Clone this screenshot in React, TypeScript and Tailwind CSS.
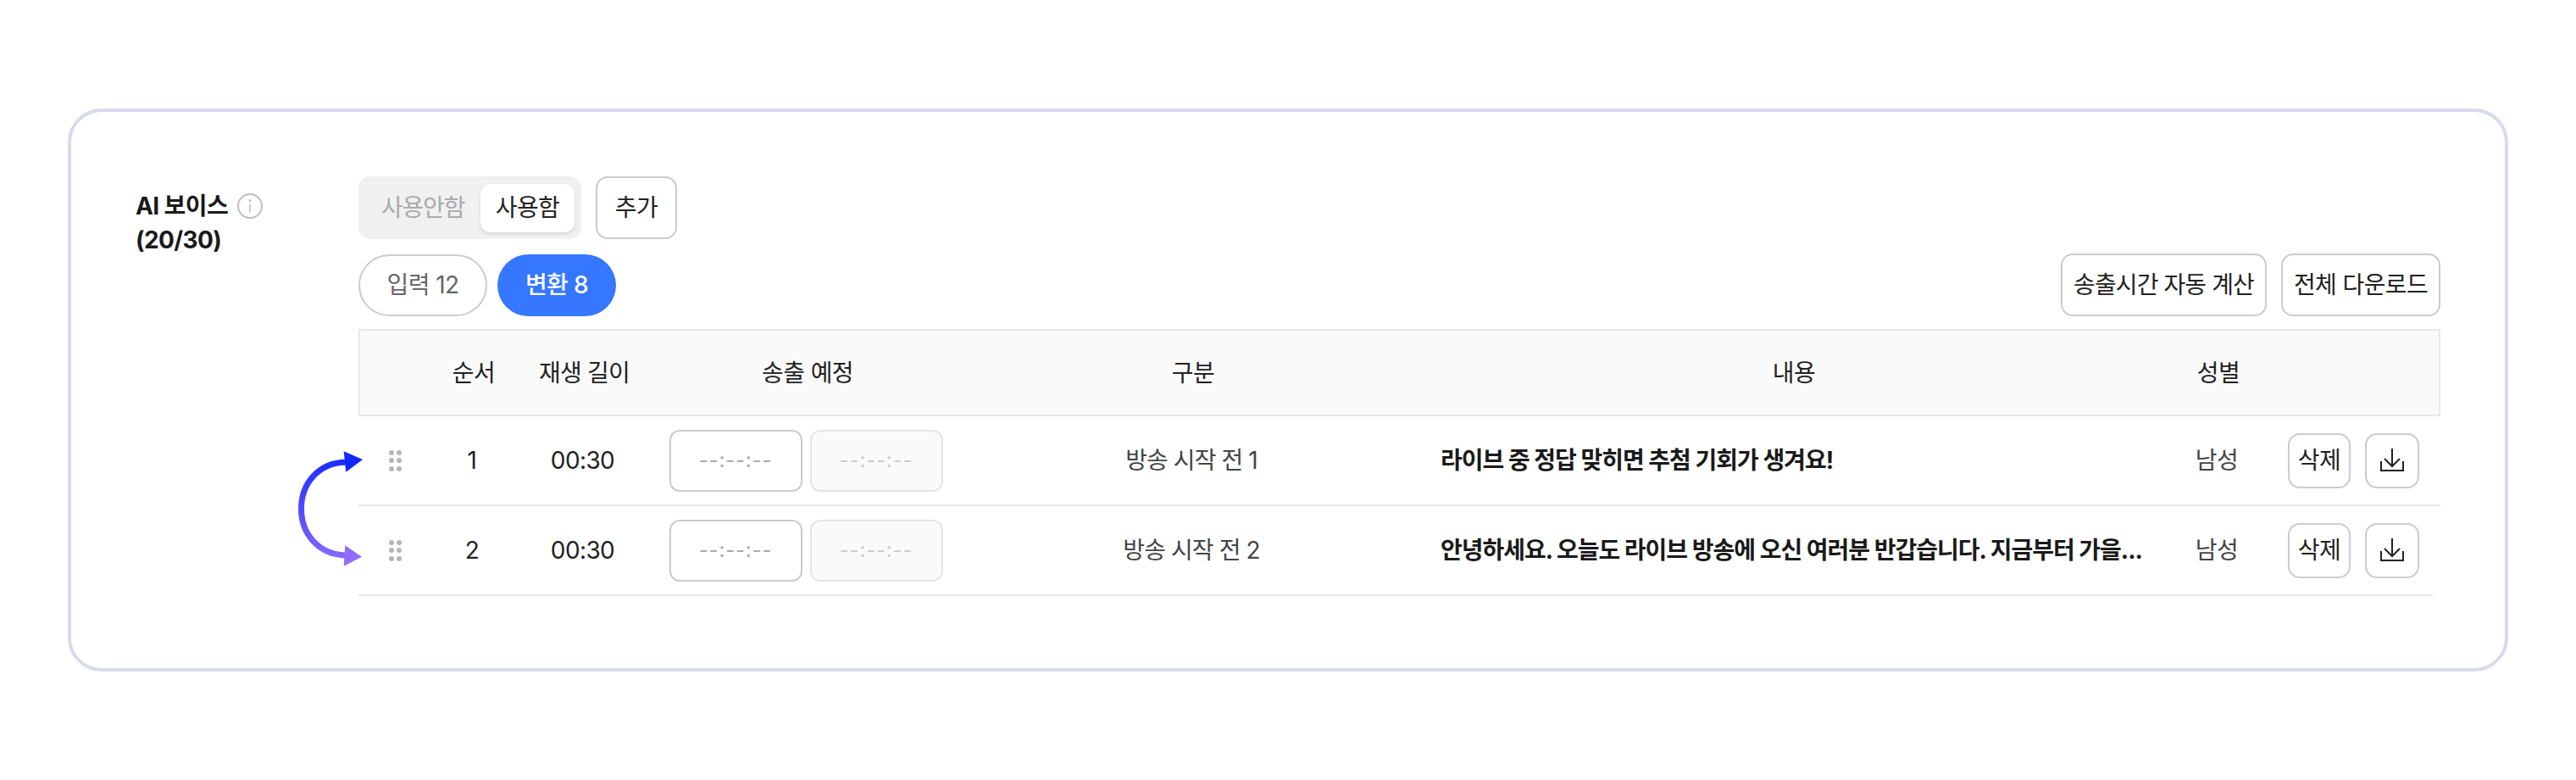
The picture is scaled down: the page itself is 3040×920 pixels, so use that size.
import { useState } from "react";

const rowGrid =
  "grid grid-cols-[87px_94px_167px_360px_550px_868px_134px_1fr] items-center";

const rows = [
  {
    order: 1,
    section: "방송 시작 전 1",
    content: "라이브 중 정답 맞히면 추첨 기회가 생겨요!",
    width: "w-full",
  },
  {
    order: 2,
    section: "방송 시작 전 2",
    content: "안녕하세요. 오늘도 라이브 방송에 오신 여러분 반갑습니다. 지금부터 가을...",
    width: "w-[2448px]",
  },
];

const InfoIcon = () => (
  <svg width="30" height="30" viewBox="0 0 30 30" fill="none" className="shrink-0">
    <circle cx="15" cy="15" r="14" stroke="#bdbdbd" strokeWidth="2" />
    <circle cx="15" cy="8.5" r="1.4" fill="#bdbdbd" />
    <path d="M15 12.5V22.5" stroke="#bdbdbd" strokeWidth="1.6" />
  </svg>
);

const DownloadIcon = () => (
  <svg width="28" height="28" viewBox="0 0 28 28" fill="none">
    <path d="M14 0V20.5" stroke="#222" strokeWidth="2" />
    <path d="M5 12L14 21L23 12" stroke="#222" strokeWidth="2" />
    <path d="M1 15V26H27V15" stroke="#222" strokeWidth="2" />
  </svg>
);

const DragHandle = () => (
  <div className="grid w-[16px] grid-cols-2 gap-x-[3px] gap-y-[3.5px] justify-self-center">
    {[0, 1, 2, 3, 4, 5].map((i) => (
      <span key={i} className="size-[6px] rounded-full bg-[#b5b5b5]" />
    ))}
  </div>
);

const SwapArrow = () => (
  <svg
    width="84"
    height="150"
    viewBox="0 0 84 150"
    fill="none"
    className="absolute left-[-78px] top-[137px]"
  >
    <defs>
      <linearGradient id="swap" x1="0" y1="7" x2="0" y2="143" gradientUnits="userSpaceOnUse">
        <stop offset="0" stopColor="#1228ff" />
        <stop offset="1" stopColor="#906dff" />
      </linearGradient>
    </defs>
    <path
      d="M63 20C31 21 10.500 45 10.500 75C10.500 105 31 129 63 130"
      stroke="url(#swap)"
      strokeWidth="7"
    />
    <path d="M60.700 7.300L83 17L63.300 31.700Z" fill="#1228ff" />
    <path d="M62.300 118.300L82 131.700L60.700 142.700Z" fill="#906dff" />
  </svg>
);

const TimeBox = ({ disabled }: { disabled?: boolean }) => (
  <div
    className={
      "flex h-[73px] w-[157px] items-center justify-center rounded-[12px] border-2 text-[24px] tracking-[0.8px] " +
      (disabled
        ? "border-[#e5e5e5] bg-[#fafafa] text-[#cccccc]"
        : "border-[#cccccc] bg-white text-[#aaaaaa]")
    }
  >
    --:--:--
  </div>
);

const OutlineButton = ({ children, className }: { children: React.ReactNode; className: string }) => (
  <button
    className={
      "flex items-center justify-center rounded-[14px] border-2 border-[#cccccc] bg-white text-[#222222] " +
      className
    }
  >
    {children}
  </button>
);

export default function App() {
  const [enabled, setEnabled] = useState(true);

  return (
    <div className="min-h-[920px] bg-white pl-[80px] pt-[128px] font-['Inter','Noto_Sans_CJK_KR',sans-serif] text-[28px] tracking-[-0.6px] text-[#222222]">
      <div className="flex h-[664px] w-[2880px] rounded-[40px] border-4 border-[#d9d9ec] p-[76px]">
        <div className="w-[263px] shrink-0 text-[28px] font-bold leading-[40px] text-[#1a1a1a]">
          <div className="mt-[15px] flex items-center gap-[11px]">
            AI 보이스
            <InfoIcon />
          </div>
          <div>(20/30)</div>
        </div>

        <div className="w-[2457px]">
          <div className="flex gap-[17px]">
            <div className="flex h-[74px] w-[263px] items-center gap-[4px] rounded-[14px] bg-[#f0f0f0] pl-[27px] pr-[8px]">
              <button
                onClick={() => setEnabled(false)}
                className="w-[113px] text-left tracking-[-1.2px] text-[#aaaaaa]"
              >
                사용안함
              </button>
              <button
                onClick={() => setEnabled(true)}
                className={
                  "h-[57px] w-[111px] rounded-[12px] " +
                  (enabled ? "bg-white shadow-[0_2px_4px_rgba(0,0,0,0.12)]" : "")
                }
              >
                사용함
              </button>
            </div>
            <OutlineButton className="h-[74px] w-[96px]">추가</OutlineButton>
          </div>

          <div className="mt-[17px] flex items-center gap-[12px]">
            <button className="h-[73px] w-[152px] rounded-full border-2 border-[#cccccc] bg-white text-[#666666]">
              입력 12
            </button>
            <button className="h-[73px] w-[140px] rounded-full bg-[#3578ff] font-medium text-white">
              변환 8
            </button>
            <div className="ml-auto flex gap-[17px]">
              <OutlineButton className="h-[74px] w-[243px] tracking-[-0.9px]">송출시간 자동 계산</OutlineButton>
              <OutlineButton className="h-[74px] w-[188px]">전체 다운로드</OutlineButton>
            </div>
          </div>

          <div className="relative mt-[15px]">
            <div className={rowGrid + " h-[103px] border-2 border-[#e8e8e8] bg-[#fafafa] text-center"}>
              <div />
              <div>순서</div>
              <div className="tracking-[-0.8px]">재생 길이</div>
              <div>송출 예정</div>
              <div>구분</div>
              <div>내용</div>
              <div>성별</div>
              <div />
            </div>

            {rows.map((row) => (
              <div
                key={row.order}
                className={rowGrid + " h-[106px] border-b-2 border-[#e8e8e8] " + row.width}
              >
                <DragHandle />
                <div className="text-center">{row.order}</div>
                <div className="text-center">00:30</div>
                <div className="flex justify-center gap-[9px]">
                  <TimeBox />
                  <TimeBox disabled />
                </div>
                <div className="text-center tracking-[-0.9px] text-[#444444]">{row.section}</div>
                <div className="whitespace-nowrap px-[19px] font-bold tracking-[-1px] text-[#1a1a1a]">
                  {row.content}
                </div>
                <div className="text-center text-[#444444]">남성</div>
                <div className="flex gap-[17px] pl-[17px]">
                  <OutlineButton className="h-[65px] w-[74px]">삭제</OutlineButton>
                  <OutlineButton className="h-[65px] w-[64px]">
                    <DownloadIcon />
                  </OutlineButton>
                </div>
              </div>
            ))}

            <SwapArrow />
          </div>
        </div>
      </div>
    </div>
  );
}
